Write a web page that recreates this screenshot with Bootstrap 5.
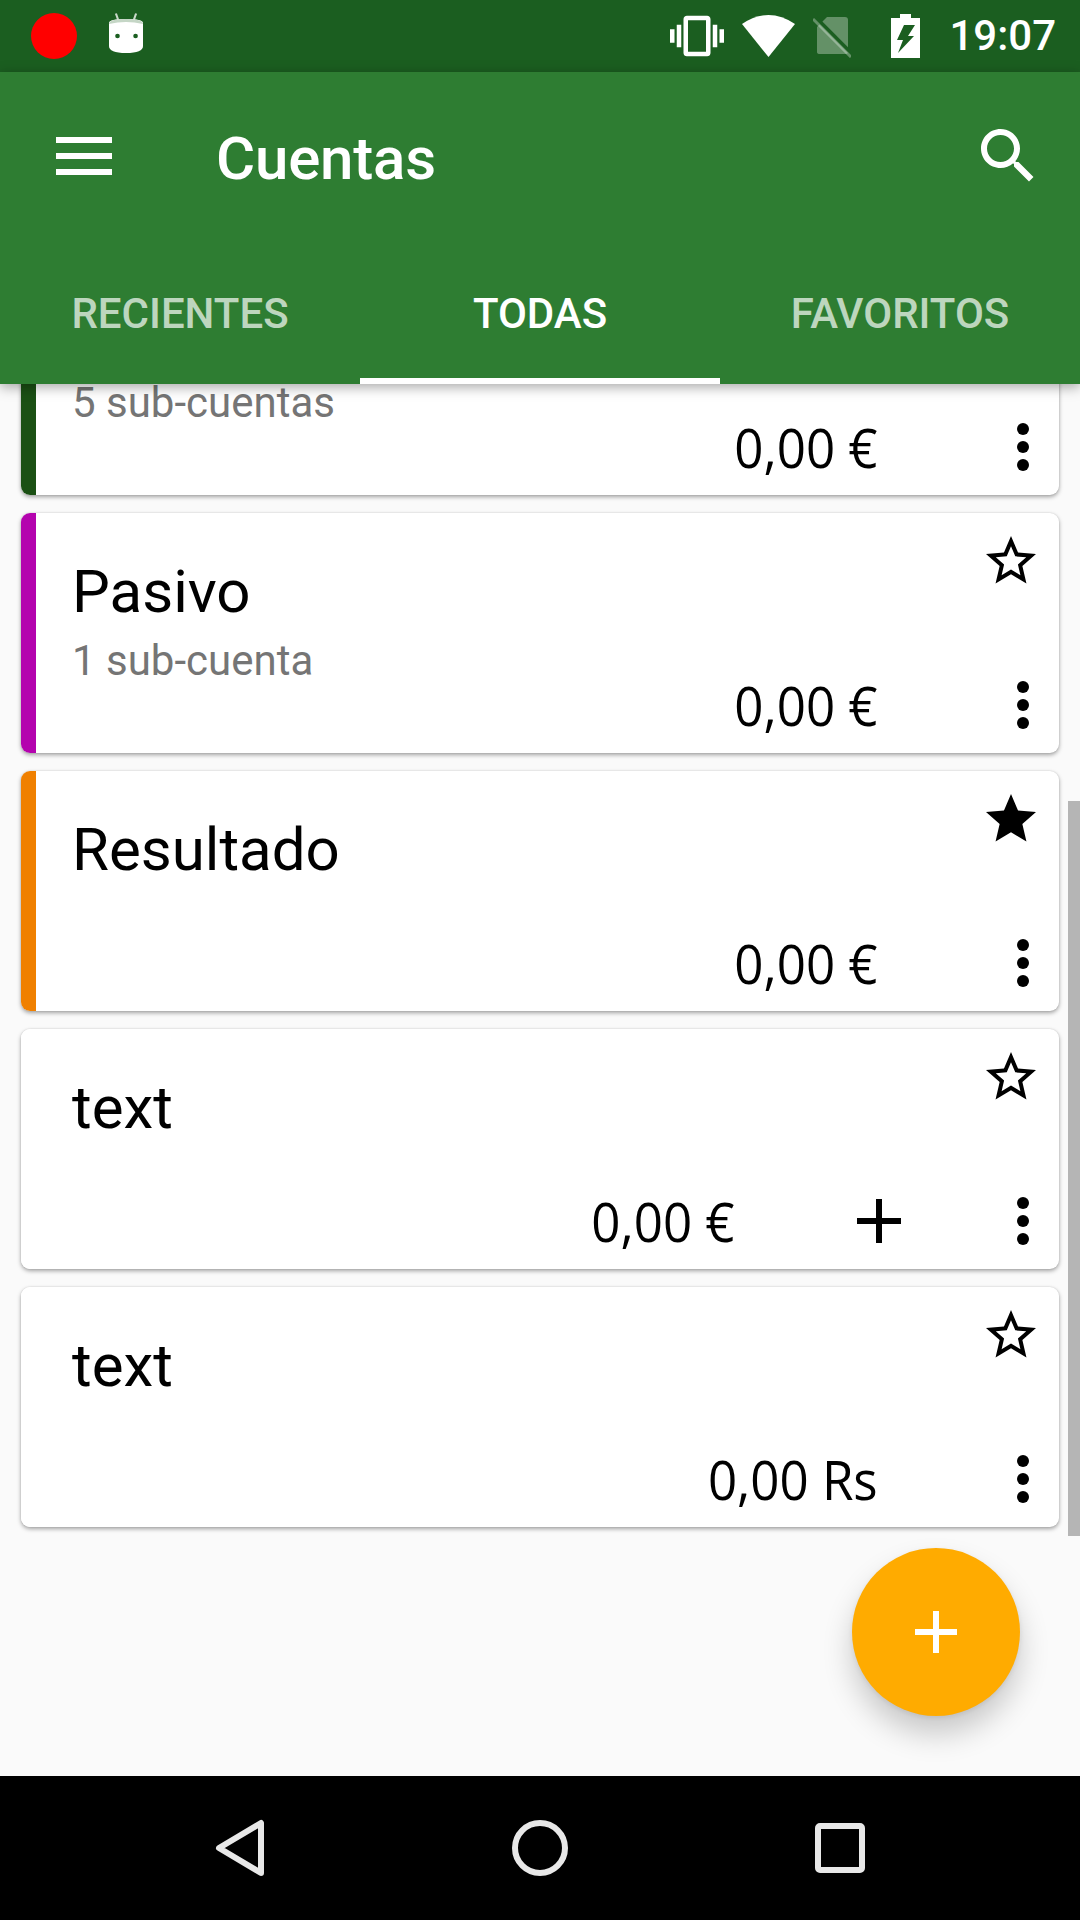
<!DOCTYPE html>
<html lang="es">

<head>
    <meta charset="UTF-8">
    <title>Cuentas</title>
    <link href="https://cdn.jsdelivr.net/npm/bootstrap@5.3.3/dist/css/bootstrap.min.css" rel="stylesheet">
    <style>
        body { width: 1080px; height: 1920px; overflow: hidden; background: #fafafa; font-family: Roboto, sans-serif; }
        .pantalla { height: 1920px; }

        .barra-estado { height: 72px; background: #1b5e20; padding-left: 31px; padding-right: 24px; color: #fff; }
        .punto-rec { width: 46px; height: 46px; border-radius: 50%; background: #f00; margin-right: 32px; }
        .ic-android { margin-top: -6px; }
        .hora { font-size: 42px; font-weight: 500; line-height: 72px; margin-left: 29px; }
        .ic-vibra { width: 54px; height: 54px; margin-right: 18px; }
        .ic-wifi { margin-right: 18px; margin-top: -1px; }
        .ic-sim { margin-right: 40px; margin-top: 3px; }

        .cabecera { background: #2e7d32; box-shadow: 0 3px 12px rgba(0, 0, 0, .35); z-index: 5; }
        .barra-app { height: 168px; color: #fff; padding: 0 36px 0 56px; }
        .titulo-app { font-size: 60px; font-weight: 500; line-height: 72px; margin-left: 104px; margin-top: 5px; letter-spacing: -.2px; }
        .ic-menu { margin-top: -1px; }
        .pestanas .nav-link { height: 144px; padding: 0; line-height: 148px; font-size: 42px; font-weight: 500; color: rgba(255, 255, 255, .7); }
        .pestanas .nav-link.active { color: #fff; box-shadow: inset 0 -6px 0 #fff; }

        .contenido { min-height: 0; padding: 0 21px 249px; gap: 18px; background: #fafafa; }
        .cuenta { height: 240px; flex: none; border: 0; border-radius: 9px; box-shadow: 0 2px 4px rgba(0, 0, 0, .35), 0 0 2px rgba(0, 0, 0, .12); }
        .franja { width: 15px; flex: none; }
        .cuerpo { padding-left: 36px; }
        .nombre { font-size: 60px; line-height: 70px; margin-top: 44px; color: #000; }
        .ic-estrella { margin: 18px 18px 0 0; }
        .subcuentas { font-size: 42px; line-height: 36px; margin-top: 16px; color: #757575; }
        .fila-saldo { padding: 0 30px 24px 0; }
        .saldo { display: inline-block; font-family: "Open Sans", sans-serif; font-size: 54px; line-height: 48px; color: #000; transform: scaleX(.945); transform-origin: right center; }
        .ic-mas { margin: 0 0 2px 122px; }
        .ic-puntos { margin: -3px 0 0 116px; }
        .saldo + .ic-puntos { margin-left: 139px; }

        .barra-scroll { top: 417px; right: 0; width: 12px; height: 735px; background: #b5b5b5; }
        .boton-flotante { right: 60px; bottom: 60px; width: 168px; height: 168px; border: 0; background: #ffab00; box-shadow: 0 18px 30px rgba(0, 0, 0, .2), 0 2px 5px rgba(0, 0, 0, .08); z-index: 3; }

        .barra-nav { height: 144px; background: #000; flex: none; z-index: 6; }
        .ic-atras { margin-left: 213px; }
        .ic-inicio { margin-left: 245px; }
        .ic-recientes { margin-left: 247px; }
    </style>
</head>

<body>
    <div class="pantalla d-flex flex-column">

        <!-- barra de estado -->
        <div class="barra-estado d-flex align-items-center flex-none">
            <div class="punto-rec"></div>
            <svg class="ic-android" width="34" height="40" viewBox="0 0 32 40" preserveAspectRatio="none">
                <path d="M6.5 .5 9 8M25.5 .5 23 8" stroke="#c8d8c8" stroke-width="2" fill="none" />
                <path d="M0 10Q0 6 16 6T32 10V33Q32 40 16 40T0 33Z" fill="#fff" />
                <path d="M0 11Q0 6 16 6T32 11Q16 7 0 11Z" fill="#c5d6c6" />
                <circle cx="8" cy="23" r="2.2" fill="#1b5e20" />
                <circle cx="25" cy="23" r="2.2" fill="#1b5e20" />
            </svg>
            <div class="ms-auto d-flex align-items-center">
                <svg class="ic-vibra" viewBox="0 0 24 24" fill="#fff">
                    <path d="M0 15h2V9H0v6zm3 2h2V7H3v10zm19-8v6h2V9h-2zm-3 8h2V7h-2v10zM16.5 3h-9C6.67 3 6 3.67 6 4.5v15c0 .83.67 1.5 1.5 1.5h9c.83 0 1.5-.67 1.5-1.5v-15c0-.83-.67-1.5-1.5-1.5zM16 19H8V5h8v14z" />
                </svg>
                <svg class="ic-wifi" width="53" height="42" viewBox="0 0 53 42">
                    <path d="M0 9Q26.5-9 53 9L26.5 42Z" fill="#fff" />
                </svg>
                <svg class="ic-sim" width="38" height="41" viewBox="0 0 38 41">
                    <path d="M14 0H32Q35 0 35 3V35Q35 37 33 37H7Q4 37 4 35V10Z" fill="#fff" fill-opacity=".32" />
                    <path d="M2 0 38 36" stroke="#1b5e20" stroke-width="4" fill="none" />
                    <path d="M0 2 38 40" stroke="#fff" stroke-opacity=".32" stroke-width="3" fill="none" />
                </svg>
                <svg width="29" height="44" viewBox="0 0 29 44">
                    <path fill-rule="evenodd" d="M9 0H20V4H29V44H0V4H9ZM13 11H24L17 22H23L7 39 12 26H6Z" fill="#fff" />
                </svg>
                <span class="hora">19:07</span>
            </div>
        </div>

        <!-- cabecera -->
        <div class="cabecera position-relative">
            <div class="barra-app d-flex align-items-center">
                <svg class="ic-menu" width="56" height="38" viewBox="0 0 56 38" fill="#fff">
                    <rect width="56" height="6" />
                    <rect y="16" width="56" height="6" />
                    <rect y="32" width="56" height="6" />
                </svg>
                <div class="titulo-app">Cuentas</div>
                <svg class="ms-auto" width="72" height="72" viewBox="0 0 24 24" fill="#fff">
                    <path d="M15.5 14h-.79l-.28-.27C15.41 12.59 16 11.11 16 9.5 16 5.91 13.09 3 9.5 3S3 5.91 3 9.5 5.91 16 9.5 16c1.61 0 3.09-.59 4.23-1.57l.27.28v.79l5 4.99L20.49 19l-4.99-5zm-6 0C7.01 14 5 11.99 5 9.5S7.01 5 9.5 5 14 7.01 14 9.5 11.99 14 9.5 14z" />
                </svg>
            </div>
            <nav class="nav nav-justified pestanas">
                <a class="nav-link" href="#">RECIENTES</a>
                <a class="nav-link active" href="#">TODAS</a>
                <a class="nav-link" href="#">FAVORITOS</a>
            </nav>
        </div>

        <!-- lista de cuentas -->
        <div class="contenido flex-grow-1 d-flex flex-column justify-content-end position-relative overflow-hidden" id="lista"></div>

        <!-- barra de navegacion -->
        <div class="barra-nav d-flex align-items-center">
            <svg class="ic-atras" width="54" height="60" viewBox="0 0 54 60">
                <path d="M48 5V55L6 30Z" fill="none" stroke="#e8e8e8" stroke-width="6" stroke-linejoin="round" />
            </svg>
            <svg class="ic-inicio" width="56" height="56" viewBox="0 0 56 56">
                <circle cx="28" cy="28" r="25" fill="none" stroke="#e8e8e8" stroke-width="6" />
            </svg>
            <svg class="ic-recientes" width="50" height="50" viewBox="0 0 50 50">
                <rect x="3" y="3" width="44" height="44" rx="2" fill="none" stroke="#e8e8e8" stroke-width="6" />
            </svg>
        </div>
    </div>

    <script>
        const estrellaVacia = 'M22 9.24l-7.19-.62L12 2 9.19 8.63 2 9.24l5.46 4.73L5.82 21 12 17.27 18.18 21l-1.63-7.03L22 9.24zM12 15.4l-3.76 2.27 1-4.28-3.32-2.88 4.38-.38L12 6.1l1.71 4.04 4.38.38-3.32 2.88 1 4.28L12 15.4z';
        const estrellaLlena = 'M12 17.27L18.18 21l-1.64-7.03L22 9.24l-7.19-.61L12 2 9.19 8.63 2 9.24l5.46 4.73L5.82 21z';

        const cuentas = [
            { nombre: '', sub: '5 sub-cuentas', saldo: '0,00 €', color: '#1b5014', fav: false },
            { nombre: 'Pasivo', sub: '1 sub-cuenta', saldo: '0,00 €', color: '#b404ae', fav: false },
            { nombre: 'Resultado', sub: '', saldo: '0,00 €', color: '#f08000', fav: true },
            { nombre: 'text', sub: '', saldo: '0,00 €', color: '#fff', fav: false, mas: true },
            { nombre: 'text', sub: '', saldo: '0,00 Rs', color: '#fff', fav: false }
        ];

        const lista = document.getElementById('lista');
        cuentas.forEach(c => {
            const tarjeta = document.createElement('div');
            tarjeta.className = 'card cuenta flex-row overflow-hidden';
            tarjeta.innerHTML = `
                <div class="franja" style="background:${c.color}"></div>
                <div class="cuerpo flex-grow-1 d-flex flex-column">
                    <div class="d-flex justify-content-between align-items-start">
                        <div class="nombre">${c.nombre || '&nbsp;'}</div>
                        <svg class="ic-estrella" width="60" height="60" viewBox="0 0 24 24"><path d="${c.fav ? estrellaLlena : estrellaVacia}" /></svg>
                    </div>
                    ${c.sub ? `<div class="subcuentas">${c.sub}</div>` : ''}
                    <div class="fila-saldo mt-auto d-flex justify-content-end align-items-end">
                        <span class="saldo">${c.saldo}</span>
                        ${c.mas ? `<svg class="ic-mas" width="44" height="44" viewBox="0 0 44 44"><path d="M19 0h6v19h19v6H25v19h-6V25H0v-6h19z" /></svg>` : ''}
                        <svg class="ic-puntos" width="12" height="48" viewBox="0 0 12 48"><circle cx="6" cy="6" r="6" /><circle cx="6" cy="24" r="6" /><circle cx="6" cy="42" r="6" /></svg>
                    </div>
                </div>`;
            lista.appendChild(tarjeta);
        });

        const scroll = document.createElement('div');
        scroll.className = 'barra-scroll position-absolute';
        lista.appendChild(scroll);

        const fab = document.createElement('button');
        fab.className = 'boton-flotante btn rounded-circle position-absolute d-flex align-items-center justify-content-center p-0';
        fab.innerHTML = '<svg width="42" height="42" viewBox="0 0 42 42" fill="#fff"><path d="M18 0h6v18h18v6H24v18h-6V24H0v-6h18z" /></svg>';
        lista.appendChild(fab);
    </script>

    <script src="https://cdn.jsdelivr.net/npm/bootstrap@5.3.3/dist/js/bootstrap.bundle.min.js"></script>
</body>

</html>
